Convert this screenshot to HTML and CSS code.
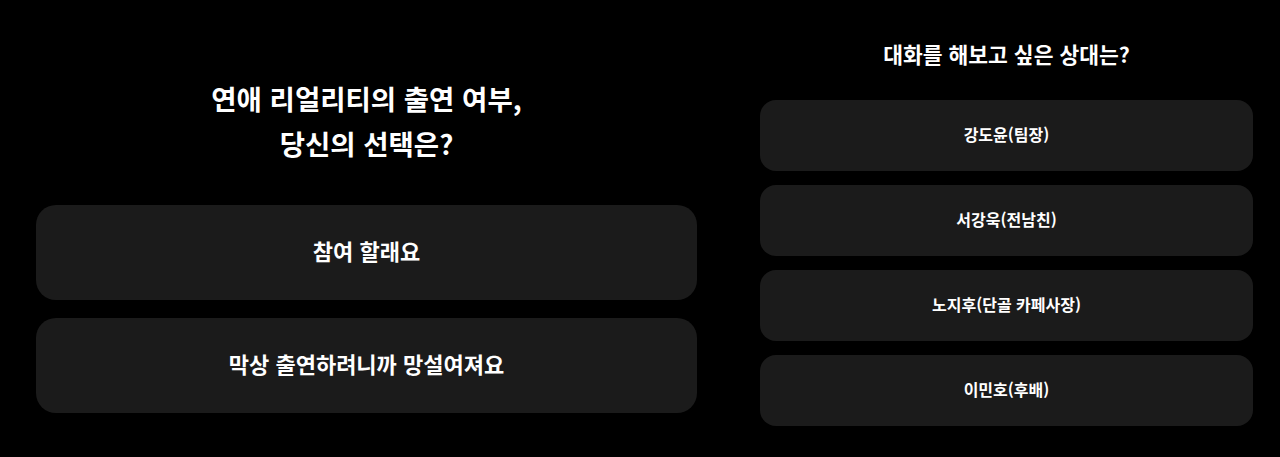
FILE: index.html
```html
<!DOCTYPE html>
<html lang="ko">
<head>
<meta charset="utf-8">
<title>선택</title>
<link rel="stylesheet" href="styles.css">
</head>
<body>
<main class="page">
  <section class="panel panel-left">
    <h1 class="title-main">연애 리얼리티의 출연 여부,<br>당신의 선택은?</h1>
    <div class="choices">
      <button class="choice choice-lg">참여 할래요</button>
      <button class="choice choice-lg">막상 출연하려니까 망설여져요</button>
    </div>
  </section>
  <section class="panel panel-right">
    <h2 class="title-sub">대화를 해보고 싶은 상대는?</h2>
    <div class="choices choices-sm">
      <button class="choice choice-sm">강도윤(팀장)</button>
      <button class="choice choice-sm">서강욱(전남친)</button>
      <button class="choice choice-sm">노지후(단골 카페사장)</button>
      <button class="choice choice-sm">이민호(후배)</button>
    </div>
  </section>
</main>
</body>
</html>
```
FILE: styles.css
```css
* { box-sizing: border-box; }
html, body {
  margin: 0;
  padding: 0;
  background: #000;
  color: #fff;
  font-family: "Noto Sans CJK KR", "Noto Sans", sans-serif;
}
.page {
  display: flex;
  align-items: flex-start;
  gap: 63px;
  padding-left: 36px;
  height: 457px;
}
.panel {
  display: flex;
  flex-direction: column;
}
.panel-left {
  width: 661px;
  padding-top: 76px;
}
.panel-right {
  width: 493px;
  padding-top: 39px;
}
.title-main {
  margin: 0 0 39px;
  font-size: 27.5px;
  line-height: 45px;
  font-weight: 700;
  text-align: center;
}
.title-sub {
  margin: 0 0 31px;
  font-size: 21.5px;
  line-height: 30px;
  font-weight: 700;
  text-align: center;
}
.choices {
  display: flex;
  flex-direction: column;
  gap: 18px;
}
.choices-sm {
  gap: 14px;
}
.choice {
  border: none;
  background: #1b1b1b;
  color: #fff;
  font-family: inherit;
  font-weight: 700;
  text-align: center;
  padding: 0;
  margin: 0;
}
.choice-lg {
  height: 95px;
  border-radius: 20px;
  font-size: 22px;
  padding-bottom: 5px;
}
.choice-sm {
  height: 71px;
  border-radius: 16px;
  font-size: 16px;
  padding-bottom: 4px;
}
```
